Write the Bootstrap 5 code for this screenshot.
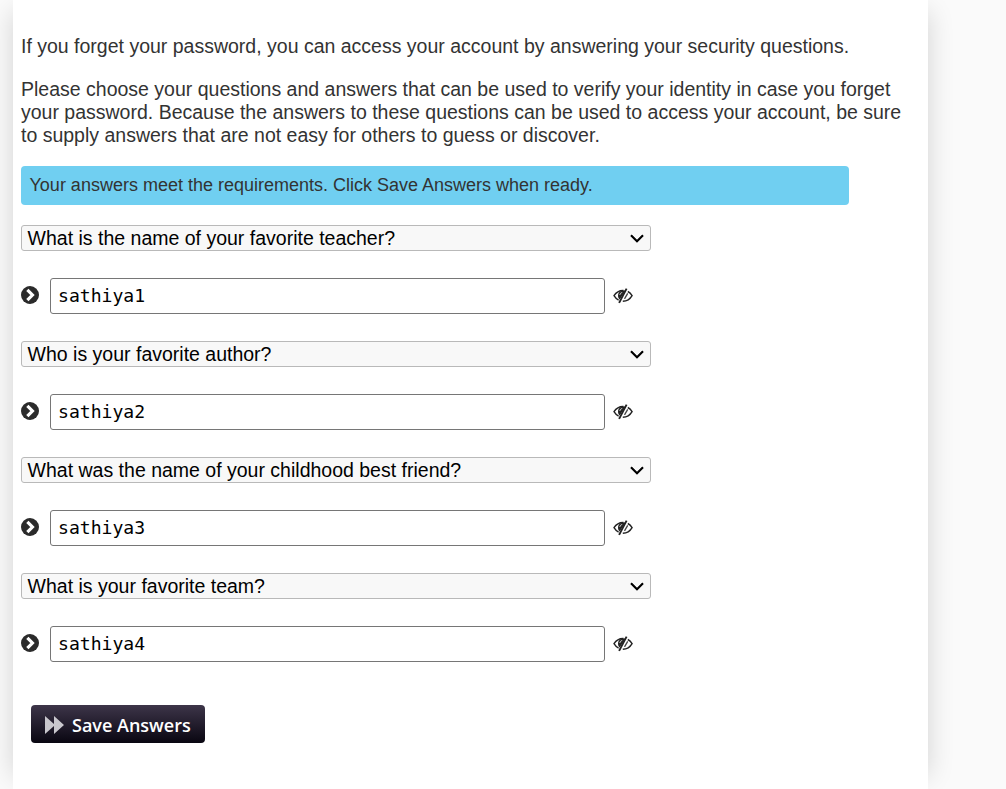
<!DOCTYPE html>
<html lang="en">
<head>
<meta charset="utf-8">
<meta name="viewport" content="width=device-width, initial-scale=1">
<title>Security Questions</title>
<link href="https://cdn.jsdelivr.net/npm/bootstrap@5.3.0/dist/css/bootstrap.min.css" rel="stylesheet">
<style>
body{background:#fafafa;font-family:"Liberation Sans",Arial,sans-serif;font-size:19.5px;line-height:23px;color:#333;height:789px;overflow:hidden}
.panel{width:915px;height:789px;margin-left:13px;padding:35px 8px 0;background:#fff;position:relative}
.panel-wrap{position:relative;z-index:0}
.panel-wrap::before{content:"";position:absolute;z-index:-1;left:13px;width:915px;top:12px;bottom:13px;box-shadow:0 0 25px rgba(0,0,0,.16)}
.intro{margin-bottom:20px;white-space:nowrap}
.notice{width:828px;height:39px;margin:19px 0 20px;padding:0 8.5px;border:0;border-radius:4px;background:#70cff1;color:#333;font-size:18px;line-height:38px}
.question{width:630px;height:26px;padding:0 5.6px;border:1px solid #b9b9b9;border-radius:3px;background:#f8f8f8 url("data:image/svg+xml,%3Csvg xmlns='http://www.w3.org/2000/svg' viewBox='0 0 14 9'%3E%3Cpath d='M1 1.2l6 6 6-6' fill='none' stroke='%23000' stroke-width='2.2'/%3E%3C/svg%3E") no-repeat right 6px center/14px 9px;color:#000;font-size:19.5px;line-height:24px}
.answer-row{height:36px;margin:27px 0}
.go{margin:-2px 0 0 -.5px}
.answer{width:555px;height:36px;margin:0 8px 0 11.5px;padding:0 7px 2px;border:1px solid #767676;border-radius:3px;color:#000;font:18.1px/32px "DejaVu Sans Mono",monospace}
.save{width:174px;height:38px;margin:43px 0 0 10px;padding:2px 14px 0;border:0;border-radius:4px;background:linear-gradient(#3d3549,#090611);color:#fff;font:600 18px/36px "Open Sans",sans-serif;gap:8px}
.save:hover{color:#fff}
</style>
</head>
<body>
<svg class="d-none">
<symbol id="go" viewBox="0 0 17 17"><circle cx="8.5" cy="8.5" r="8.5" fill="#2b2b2b"/><path d="M6 3.700l4.800 4.800L6 13.300" fill="none" stroke="#fff" stroke-width="3"/></symbol>
<symbol id="eye" viewBox="0 0 20 16"><path d="M10.500 2.500C6 2.300 3 4.600 1 7.700c1.200 2 2.700 3.500 4.600 4.500M14.800 3.500c1.800.9 3.200 2.300 4.300 4.100-2 3.400-5 5.500-9.300 5.700" fill="none" stroke="#222" stroke-width="1.400"/><path d="M12.500 2.700C8.500 1.600 5 3.800 5 7.400c0 1.700.5 3.200 1.700 4.200z" fill="#222"/><path d="M6.900 7c0-1.300.9-2.300 2.300-2.500" fill="none" stroke="#fff" stroke-width=".8"/><path d="M13.600.6L6.100 14.900" stroke="#222" stroke-width="1.900"/><path d="M14.700 5.300L11.500 10.800" fill="none" stroke="#444" stroke-width="1.300"/></symbol>
</svg>
<div class="panel-wrap">
<main class="panel">
<p class="intro">If you forget your password, you can access your account by answering your security questions.</p>
<p class="intro mb-0">Please choose your questions and answers that can be used to verify your identity in case you forget<br>your password. Because the answers to these questions can be used to access your account, be sure<br>to supply answers that are not easy for others to guess or discover.</p>
<div class="alert notice" role="alert">Your answers meet the requirements. Click Save Answers when ready.</div>
<div class="form-select question">What is the name of your favorite teacher?</div>
<div class="answer-row d-flex align-items-center"><svg class="go" width="18" height="18"><use href="#go"/></svg><input class="answer" value="sathiya1" aria-label="Answer 1"><svg width="20" height="16"><use href="#eye"/></svg></div>
<div class="form-select question">Who is your favorite author?</div>
<div class="answer-row d-flex align-items-center"><svg class="go" width="18" height="18"><use href="#go"/></svg><input class="answer" value="sathiya2" aria-label="Answer 2"><svg width="20" height="16"><use href="#eye"/></svg></div>
<div class="form-select question">What was the name of your childhood best friend?</div>
<div class="answer-row d-flex align-items-center"><svg class="go" width="18" height="18"><use href="#go"/></svg><input class="answer" value="sathiya3" aria-label="Answer 3"><svg width="20" height="16"><use href="#eye"/></svg></div>
<div class="form-select question">What is your favorite team?</div>
<div class="answer-row d-flex align-items-center"><svg class="go" width="18" height="18"><use href="#go"/></svg><input class="answer" value="sathiya4" aria-label="Answer 4"><svg width="20" height="16"><use href="#eye"/></svg></div>
<button class="btn save d-flex align-items-center text-nowrap" type="button"><svg width="19" height="18" viewBox="0 0 19 18"><path d="M0 0l9 8V0l10 9-10 9v-8l-9 8z" fill="#c9c7cd"/></svg>Save Answers</button>
</main>
</div>
<script src="https://cdn.jsdelivr.net/npm/bootstrap@5.3.0/dist/js/bootstrap.bundle.min.js"></script>
</body>
</html>
